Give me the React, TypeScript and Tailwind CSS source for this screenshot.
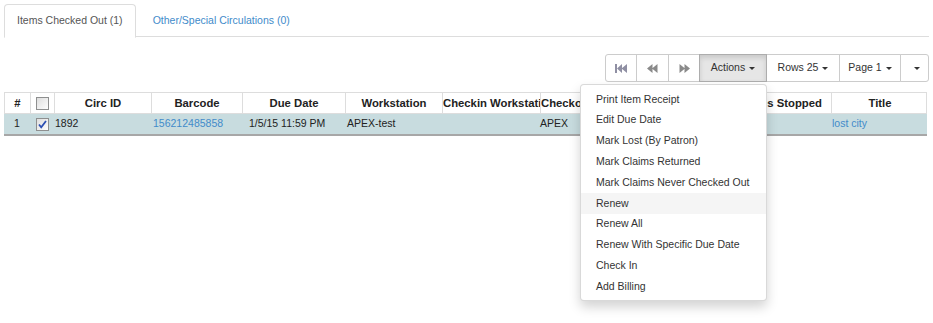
import React from "react";

const font = { fontFamily: '"Liberation Sans", Arial, sans-serif' };

const columns = [
  { title: "#", w: "w-[26px]" },
  { title: "", w: "w-[24px]", check: true },
  { title: "Circ ID", w: "w-[97px]" },
  { title: "Barcode", w: "w-[91px]" },
  { title: "Due Date", w: "w-[103px]" },
  { title: "Workstation", w: "w-[97px]" },
  { title: "Checkin Workstation", w: "w-[98px]" },
  { title: "Checkout Workstation", w: "w-[97px]" },
  { title: "Checkin Time", w: "w-[97px]" },
  { title: "Fines Stopped", w: "w-[97px]" },
  { title: "Title", w: "w-[96px]" },
];

const menuItems = [
  "Print Item Receipt",
  "Edit Due Date",
  "Mark Lost (By Patron)",
  "Mark Claims Returned",
  "Mark Claims Never Checked Out",
  "Renew",
  "Renew All",
  "Renew With Specific Due Date",
  "Check In",
  "Add Billing",
];

function Caret() {
  return (
    <span className="ml-[4px] inline-block w-0 h-0 border-x-[3px] border-x-transparent border-t-[3px] border-t-[#333] align-middle" />
  );
}

function CheckBox({ checked }: { checked?: boolean }) {
  const id = checked ? "cbg1" : "cbg0";
  return (
    <svg width="13" height="13" viewBox="0 0 13 13">
      <defs>
        <linearGradient id={id} x1="0" y1="0" x2="1" y2="1">
          <stop offset="0" stopColor="#dcdcdc" />
          <stop offset="1" stopColor="#ffffff" />
        </linearGradient>
      </defs>
      <rect x="0.5" y="0.5" width="12" height="12" fill={`url(#${id})`} stroke="#8e8f8f" />
      {checked && (
        <path d="M3 6.5 L5.2 9.2 L10 3" fill="none" stroke="#2b4fb3" strokeWidth="1.8" />
      )}
    </svg>
  );
}

function FastBack({ color }: { color: string }) {
  return (
    <svg width="12" height="9" viewBox="0 0 12 9">
      <rect x="0" y="0" width="2" height="9" fill={color} />
      <path d="M2 4.5 L7 0 V9 Z M6.5 4.5 L12 0 V9 Z" fill={color} />
    </svg>
  );
}

function Back({ color }: { color: string }) {
  return (
    <svg width="11" height="9" viewBox="0 0 11 9">
      <path d="M0 4.5 L5.5 0 V9 Z M5 4.5 L10.5 0 V9 Z" fill={color} />
    </svg>
  );
}

function Forward({ color }: { color: string }) {
  return (
    <svg width="11" height="9" viewBox="0 0 11 9">
      <path d="M0.5 0 L6 4.5 L0.5 9 Z M5.5 0 L11 4.5 L5.5 9 Z" fill={color} />
    </svg>
  );
}

export default function App() {
  return (
    <div className="bg-white w-[933px] h-[323px] px-[4px] pt-[4px] text-[10.5px] text-[#333]" style={font}>
      {/* Tabs */}
      <ul className="flex border-b border-[#ddd] h-[33px]">
        <li className="-mb-px">
          <div className="h-[34px] flex items-center px-[12px] border border-[#ddd] border-b-white rounded-t-[4px] bg-white text-[#555]">
            Items Checked Out (1)
          </div>
        </li>
        <li className="ml-[2px]">
          <div className="h-[33px] flex items-center px-[15px] text-[#428bca]">
            Other/Special Circulations (0)
          </div>
        </li>
      </ul>

      {/* Toolbar */}
      <div className="flex justify-end mt-[17px] relative z-10">
        <div className="flex h-[28px]">
          <button className="w-[32px] flex items-center justify-center border border-[#ccc] rounded-l-[3px] bg-white">
            <FastBack color="#8f8fa3" />
          </button>
          <button className="-ml-px w-[33px] flex items-center justify-center border border-[#ccc] bg-white">
            <Back color="#8a8a8a" />
          </button>
          <button className="-ml-px w-[32px] flex items-center justify-center border border-[#ccc] bg-white">
            <Forward color="#8a8a8a" />
          </button>
          <div className="relative -ml-px">
            <button className="w-[68px] h-[28px] flex items-center justify-center border border-[#adadad] bg-[#e6e6e6] shadow-[inset_0_3px_5px_rgba(0,0,0,0.125)] text-[#333]">
              Actions
              <Caret />
            </button>
            <div className="absolute right-0 top-full mt-[2px] w-[187px] bg-white border border-[rgba(0,0,0,0.15)] rounded-[4px] shadow-[0_6px_12px_rgba(0,0,0,0.175)] pt-[4px] pb-[3px]">
              {menuItems.map((item) => (
                <div
                  key={item}
                  className={`h-[20.8px] flex items-center px-[15px] whitespace-nowrap text-[#333] ${
                    item === "Renew" ? "bg-[#f5f5f5]" : ""
                  }`}
                >
                  {item}
                </div>
              ))}
            </div>
          </div>
          <button className="-ml-px w-[74px] flex items-center justify-center border border-[#ccc] bg-white text-[#333]">
            Rows 25
            <Caret />
          </button>
          <button className="-ml-px w-[62px] flex items-center justify-center border border-[#ccc] bg-white text-[#333]">
            Page 1
            <Caret />
          </button>
          <button className="-ml-px w-[29px] flex items-center justify-center border border-[#ccc] rounded-r-[3px] bg-white">
            <Caret />
          </button>
        </div>
      </div>

      {/* Grid */}
      <div className="mt-[10px] w-[923px]">
        <div className="flex border border-[#ddd] h-[22px]">
          {columns.map((c, i) => (
            <div
              key={i}
              className={`${c.w} shrink-0 h-full flex items-center ${
                i < columns.length - 1 ? "border-r border-[#ddd]" : ""
              } overflow-hidden`}
            >
              {c.check ? (
                <div className="w-full flex justify-center">
                  <CheckBox />
                </div>
              ) : (
                <div className="w-full text-center font-bold text-[11.3px] text-[#222] whitespace-nowrap overflow-hidden">
                  {c.title}
                </div>
              )}
            </div>
          ))}
        </div>
        <div className="flex h-[22px] bg-[#c8dcdf] border-b-2 border-[#a7a7a7] text-[#222]">
          <div className="w-[26px] shrink-0 flex items-center justify-center">1</div>
          <div className="w-[24px] shrink-0 flex items-center justify-center">
            <CheckBox checked />
          </div>
          <div className="w-[97px] shrink-0 flex items-center pl-[1px]">1892</div>
          <div className="w-[91px] shrink-0 flex items-center pl-[2px] text-[#428bca]">156212485858</div>
          <div className="w-[103px] shrink-0 flex items-center pl-[7px]">1/5/15 11:59 PM</div>
          <div className="w-[97px] shrink-0 flex items-center pl-[2px]">APEX-test</div>
          <div className="w-[98px] shrink-0" />
          <div className="w-[97px] shrink-0 flex items-center">APEX</div>
          <div className="w-[97px] shrink-0" />
          <div className="w-[97px] shrink-0" />
          <div className="w-[96px] shrink-0 flex items-center pl-[1px] text-[#428bca]">lost city</div>
        </div>
      </div>
    </div>
  );
}
